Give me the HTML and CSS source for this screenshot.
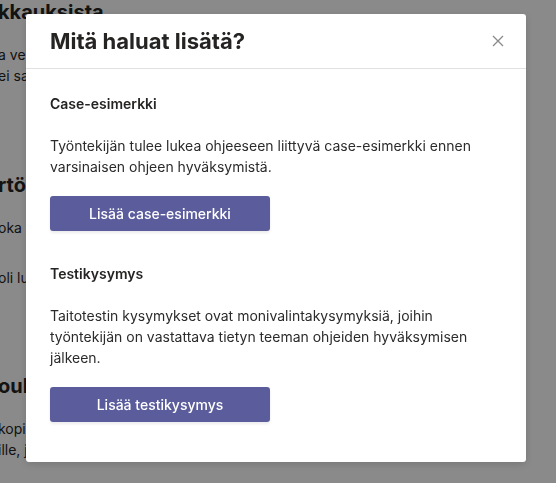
FILE: index.html
```html
<!DOCTYPE html>
<html lang="fi">
<head>
    <meta charset="UTF-8">
    <meta name="viewport" content="width=device-width, initial-scale=1.0">
    <title>Mitä haluat lisätä?</title>
    <link rel="stylesheet" href="styles.css">
</head>
<body>

<div class="page">
    <h2 class="page-title">kkauksista</h2>
    <p class="page-text">a vertailu ohjeiden välillä<br>ei saa muuttaa</p>

    <h2 class="page-title second">rtönä</h2>
    <p class="page-text">oka ohjeella</p>
    <p class="page-text gap">oli luettu</p>

    <h2 class="page-title third">oukko</h2>
    <p class="page-text">kopioida<br>ille, joita</p>
</div>

<div class="overlay">
    <div class="modal">
        <div class="modal-header">
            <h1>Mitä haluat lisätä?</h1>
            <button class="close" aria-label="Sulje">
                <svg width="12" height="12" viewBox="0 0 12 12">
                    <path d="M1 1 L11 11 M11 1 L1 11" stroke="#8a8a8a" stroke-width="1.3" fill="none"/>
                </svg>
            </button>
        </div>
        <div class="modal-body">
            <div class="section">
                <h3>Case-esimerkki</h3>
                <p>Työntekijän tulee lukea ohjeeseen liittyvä case-esimerkki ennen varsinaisen ohjeen hyväksymistä.</p>
                <button class="add">Lisää case-esimerkki</button>
            </div>
            <div class="section">
                <h3>Testikysymys</h3>
                <p>Taitotestin kysymykset ovat monivalintakysymyksiä, joihin työntekijän on vastattava tietyn teeman ohjeiden hyväksymisen jälkeen.</p>
                <button class="add">Lisää testikysymys</button>
            </div>
        </div>
    </div>
</div>

</body>
</html>
```

FILE: styles.css
```css
body {
    font-family: Inter, "Noto Sans", Arial, sans-serif;
    margin: 0;
    padding: 0;
    background-color: white;
    color: #252423;
    overflow: hidden;
    height: 483px;
}

.page {
    padding: 0;
}
.page-title {
    font-size: 20px;
    font-weight: 700;
    margin: -2px 0 0 -2px;
    line-height: 28px;
}
.page-title.second {
    margin-top: 85px;
}
.page-title.third {
    margin-top: 84px;
}
.page-text {
    font-size: 14px;
    line-height: 21px;
    margin: 18px 0 0 -2px;
    color: #252423;
}
.page-text.gap {
    margin-top: 29px;
}

.overlay {
    position: fixed;
    top: 0;
    left: 0;
    right: 0;
    bottom: 0;
    background-color: rgba(0, 0, 0, 0.46);
    padding: 14px 0 0 26px;
}

.modal {
    width: 500px;
    background-color: white;
    border-radius: 3px;
    box-shadow: 0 2px 8px rgba(0, 0, 0, 0.15);
}

.modal-header {
    display: flex;
    align-items: center;
    justify-content: space-between;
    height: 54px;
    padding: 0 22px 0 24px;
    border-bottom: 1px solid #e1e1e1;
}
.modal-header h1 {
    font-size: 22px;
    font-weight: 700;
    margin: 0;
    color: #252423;
}
.close {
    background: none;
    border: none;
    padding: 0;
    width: 12px;
    height: 12px;
    cursor: pointer;
}
.close svg {
    display: block;
}

.modal-body {
    padding: 24px 24px 40px 24px;
}
.section + .section {
    margin-top: 32px;
}
.section h3 {
    font-size: 14px;
    font-weight: 600;
    line-height: 21px;
    margin: 0 0 21px 0;
    color: #252423;
}
.section p {
    font-size: 14px;
    line-height: 21px;
    margin: 0 0 19px 0;
    color: #2b2b2b;
}

.add {
    display: block;
    width: 220px;
    height: 35px;
    border: none;
    border-radius: 3px;
    background-color: #5b5c9c;
    color: white;
    font-family: Inter, "Noto Sans", Arial, sans-serif;
    font-size: 14px;
    font-weight: 500;
    box-shadow: 0 2px 3px rgba(0, 0, 0, 0.08);
    cursor: pointer;
}
```
